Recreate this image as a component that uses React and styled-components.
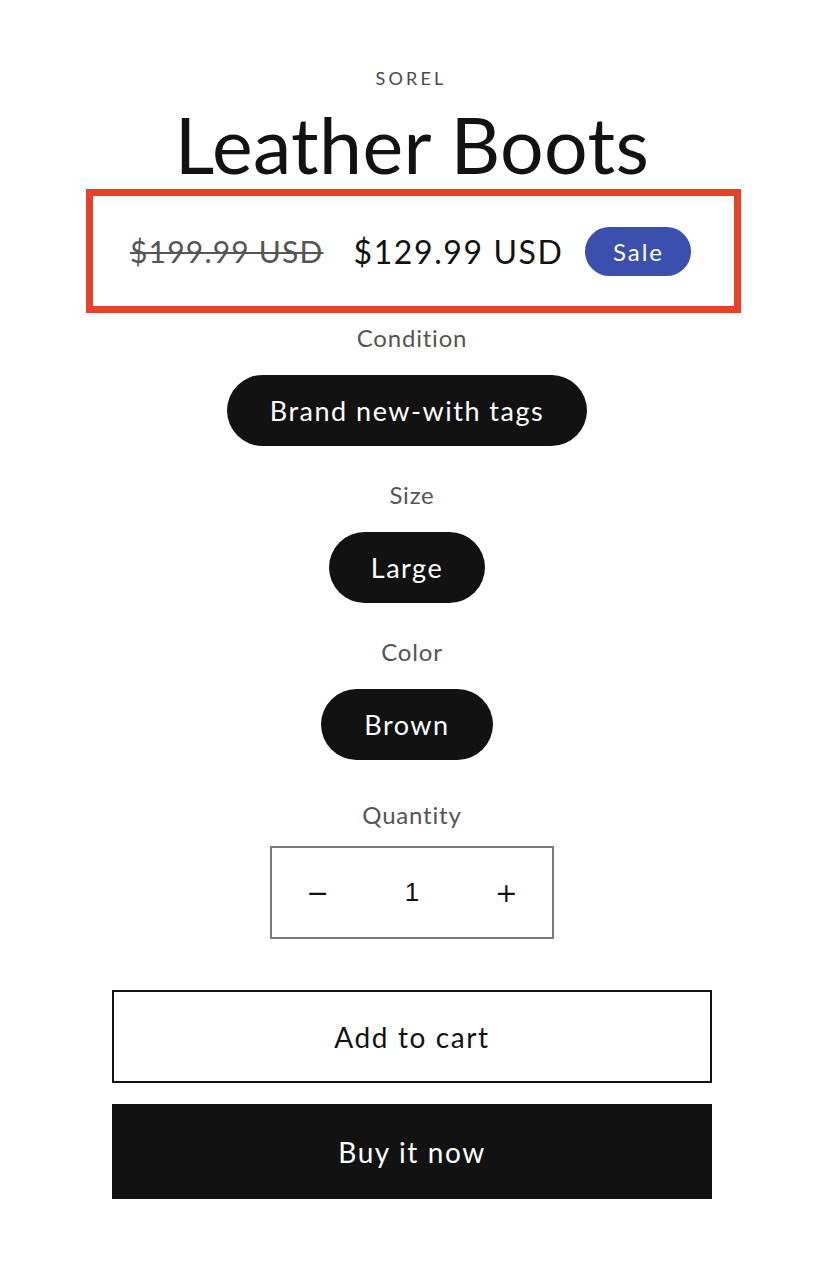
import styled, { createGlobalStyle } from 'styled-components';

const GlobalStyle = createGlobalStyle`
  body {
    margin: 0;
    background: #ffffff;
    font-family: Lato, 'Noto Sans', sans-serif;
    color: #121212;
  }
`;

const Page = styled.main`
  display: flex;
  flex-direction: column;
  align-items: center;
  padding: 66px 4px 0 0;
`;

const Vendor = styled.p`
  margin: 0 2px 0 0;
  font-size: 18px;
  line-height: 24px;
  letter-spacing: 3.2px;
  color: #4a4a4a;
  text-transform: uppercase;
`;

const Title = styled.h1`
  margin: 11px 0 0;
  font-size: 77px;
  font-weight: 400;
  line-height: 86px;
  letter-spacing: 0.4px;
  color: #121212;
`;

const PriceBox = styled.div`
  box-sizing: border-box;
  width: 655px;
  height: 124px;
  margin: 2px 0 0 3px;
  border: 7px solid #e8412a;
  display: flex;
  align-items: center;
  padding-left: 37px;
`;

const OldPrice = styled.s`
  font-size: 30px;
  letter-spacing: 1.2px;
  color: #555555;
  text-decoration-thickness: 2px;
`;

const NewPrice = styled.span`
  margin-left: 30px;
  font-size: 32px;
  letter-spacing: 1.6px;
  color: #121212;
`;

const Badge = styled.span`
  margin-left: 22px;
  width: 106px;
  height: 49px;
  border-radius: 25px;
  background: #3b4fae;
  color: #ffffff;
  font-size: 24px;
  letter-spacing: 2px;
  display: flex;
  align-items: center;
  justify-content: center;
`;

const Field = styled.fieldset`
  border: 0;
  margin: ${({ $top }) => $top}px 0 0;
  padding: 0;
  display: flex;
  flex-direction: column;
  align-items: center;
`;

const Label = styled.legend`
  padding: 0;
  margin: 0 auto;
  font-size: 24px;
  line-height: 30px;
  letter-spacing: 0.8px;
  color: #555555;
  text-align: center;
`;

const Pill = styled.span`
  box-sizing: border-box;
  margin: 22px 10px 0 0;
  height: 71px;
  padding: 0 ${({ $pad }) => $pad}px;
  border-radius: 36px;
  background: #121212;
  color: #ffffff;
  font-size: 27px;
  letter-spacing: 1.5px;
  display: flex;
  align-items: center;
  justify-content: center;
`;

const Quantity = styled.div`
  box-sizing: border-box;
  margin-top: 16px;
  width: 284px;
  height: 93px;
  border: 2px solid #7a7a7a;
  display: grid;
  grid-template-columns: 1fr 1fr 1fr;
  align-items: center;
  justify-items: center;
  font-family: 'Liberation Sans', Arial, sans-serif;
  font-size: 26px;
  color: #121212;
`;

const QtyButton = styled.span`
  font-family: 'DejaVu Sans', sans-serif;
  font-size: 27px;
  margin-left: ${({ $nudge }) => $nudge}px;
`;

const Actions = styled.div`
  margin-top: 51px;
  width: 600px;
  display: flex;
  flex-direction: column;
  gap: 21px;
`;

const ActionButton = styled.button`
  box-sizing: border-box;
  width: 100%;
  height: ${({ $primary }) => ($primary ? 95 : 93)}px;
  border: 2px solid #121212;
  background: ${({ $primary }) => ($primary ? '#121212' : '#ffffff')};
  color: ${({ $primary }) => ($primary ? '#ffffff' : '#121212')};
  font-family: Lato, 'Noto Sans', sans-serif;
  font-size: 28px;
  letter-spacing: 1.6px;
  cursor: pointer;
`;

const options = [
  { label: 'Condition', value: 'Brand new-with tags', pad: 43, top: 10 },
  { label: 'Size', value: 'Large', pad: 42, top: 34 },
  { label: 'Color', value: 'Brown', pad: 43, top: 34 },
];

const App = () => (
  <>
    <GlobalStyle />
    <Page>
      <Vendor>Sorel</Vendor>
      <Title>Leather Boots</Title>
      <PriceBox>
        <OldPrice>$199.99 USD</OldPrice>
        <NewPrice>$129.99 USD</NewPrice>
        <Badge>Sale</Badge>
      </PriceBox>
      {options.map((opt) => (
        <Field key={opt.label} $top={opt.top}>
          <Label>{opt.label}</Label>
          <Pill $pad={opt.pad}>{opt.value}</Pill>
        </Field>
      ))}
      <Field $top={40}>
        <Label>Quantity</Label>
        <Quantity>
          <QtyButton $nudge={-2}>−</QtyButton>
          <span>1</span>
          <QtyButton $nudge={2}>+</QtyButton>
        </Quantity>
      </Field>
      <Actions>
        <ActionButton>Add to cart</ActionButton>
        <ActionButton $primary>Buy it now</ActionButton>
      </Actions>
    </Page>
  </>
);

export default App;
